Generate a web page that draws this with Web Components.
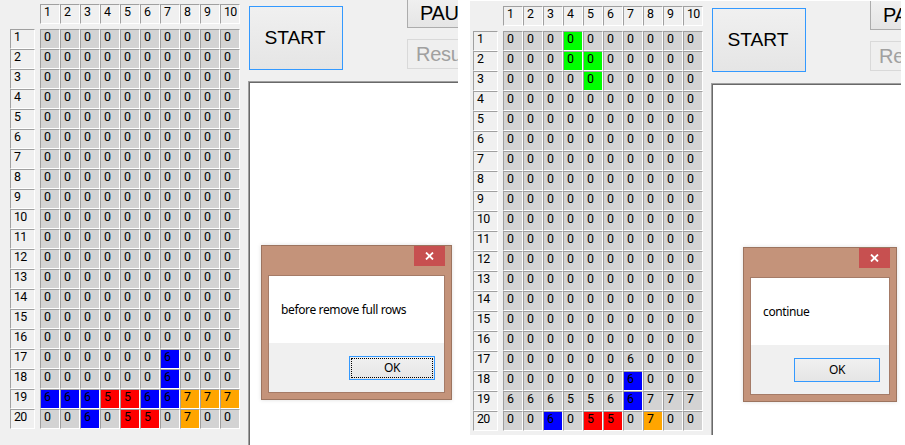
<!DOCTYPE html>
<html lang="en"><head><meta charset="utf-8"><title>Tetris board</title>
<style>
html,body{margin:0;width:905px;height:445px;overflow:hidden;background:#fff}
body{display:flex;align-items:flex-start;font-family:"Liberation Sans",Arial,sans-serif;color:#000}
game-window{--h:445px;--w:458px;--pl:10px;--pt:4px}
game-window.second{--h:434px;--w:431px;--pl:3px;--pt:5px;margin:1px 0 0 12px}
message-box{position:absolute;left:261px;top:245px;width:191px;height:155px}
message-box.second{left:743px;top:247px;width:154px}
</style></head><body>
<game-window pause="PAU" resume="Resu">
<number-grid slot="board" colored="17:7b 18:7b 19:1b 19:2b 19:3b 19:4r 19:5r 19:6b 19:7b 19:8o 19:9o 19:10o 20:3b 20:5r 20:6r 20:8o" numbers="17:7=6 18:7=6 19:1=6 19:2=6 19:3=6 19:4=5 19:5=5 19:6=6 19:7=6 19:8=7 19:9=7 19:10=7 20:3=6 20:5=5 20:6=5 20:8=7"></number-grid>
</game-window>
<game-window class="second" pause="PA" resume="Re">
<number-grid slot="board" colored="1:4g 2:4g 2:5g 3:5g 18:7b 19:7b 20:3b 20:5r 20:6r 20:8o" numbers="17:7=6 18:7=6 19:1=6 19:2=6 19:3=6 19:4=5 19:5=5 19:6=6 19:7=6 19:8=7 19:9=7 19:10=7 20:3=6 20:5=5 20:6=5 20:8=7"></number-grid>
</game-window>
<message-box focused>before remove full rows</message-box>
<message-box class="second">continue</message-box>
<script>
class NumberGrid extends HTMLElement{
 connectedCallback(){
  const root=this.attachShadow({mode:'open'});
  const colors={},nums={};
  this.getAttribute('colored').split(' ').forEach(s=>colors[s.slice(0,-1)]=s.slice(-1));
  this.getAttribute('numbers').split(' ').forEach(s=>{const [k,v]=s.split('=');nums[k]=v});
  let top='',side='',cells='';
  for(let c=1;c<=10;c++)top+=`<div class="cell head">${c}</div>`;
  for(let r=1;r<=20;r++){
   side+=`<div class="cell head row">${r}</div>`;
   for(let c=1;c<=10;c++){const k=r+':'+c;cells+=`<div class="cell ${colors[k]||''}">${nums[k]||0}</div>`}
  }
  root.innerHTML=`<style>
  :host{display:grid;grid-template-columns:25px 200px;grid-template-rows:20px 400px;gap:5px;font:12.4px/14px Roboto,sans-serif;letter-spacing:-.7px}
  .top,.cells{display:grid;grid-template-columns:repeat(10,20px);grid-auto-rows:20px}
  .top{grid-column:2}
  .side{display:grid;grid-auto-rows:20px}
  .cell{box-sizing:border-box;background:#d3d3d3;border:1px solid;border-color:#a0a0a0 #fff #fff #a0a0a0;padding:0 0 0 3px;white-space:nowrap}
  .head{background:#f0f0f0}
  .g{background:#0f0}.b{background:#00f}.r{background:#f00}.o{background:#ffa500}
  </style><div class="top">${top}</div><div class="side">${side}</div><div class="cells">${cells}</div>`;
 }
}
class PushButton extends HTMLElement{
 connectedCallback(){
  this.attachShadow({mode:'open'}).innerHTML=`<style>
  :host{display:flex;box-sizing:border-box;align-items:center;justify-content:center;border:1px solid #acacac;background:linear-gradient(#f0f0f0,#e5e5e5);white-space:nowrap;overflow:hidden}
  :host([default]){border-color:#3399ff}
  :host([disabled]){border-color:#d9d9d9;background:#efefef;color:#a0a0a0}
  </style><slot></slot>`;
 }
}
class GameWindow extends HTMLElement{
 connectedCallback(){
  this.attachShadow({mode:'open'}).innerHTML=`<style>
  :host{display:flex;box-sizing:border-box;width:var(--w);height:var(--h);padding-left:var(--pl);background:#f0f0f0;overflow:hidden;flex:none}
  .board{padding-top:var(--pt);width:230px;flex:none}
  .side{display:flex;flex-direction:column;flex:1;min-width:0;margin-left:8px;height:100%;overflow:hidden}
  .tools{display:flex;height:77px;margin-top:var(--pt);flex:none;gap:64px}
  .start{width:94px;height:64px;margin:2px 0 0 1px;font-size:19.2px;flex:none;padding-right:2px}
  .col{display:flex;flex-direction:column;gap:11px;width:110px;flex:none;margin-top:-6px}
  .col push-button{height:30px;flex:none;font-size:20px;letter-spacing:-.4px;justify-content:flex-start;padding-left:12px}
  .col push-button[disabled]{padding-left:8px;letter-spacing:-.3px}
  .text{box-sizing:border-box;flex:1;border:solid #a0a0a0;border-width:1px 0 0 1px;background:#fff}
  .text i{display:block;height:100%;box-sizing:border-box;border:solid #696969;border-width:1px 0 0 1px}
  </style><div class="board"><slot name="board"></slot></div><div class="side"><div class="tools"><push-button class="start" default>START</push-button><div class="col"><push-button>${this.getAttribute('pause')}</push-button><push-button disabled>${this.getAttribute('resume')}</push-button></div></div><div class="text"><i></i></div></div>`;
 }
}
class MessageBox extends HTMLElement{
 connectedCallback(){
  this.attachShadow({mode:'open'}).innerHTML=`<style>
  :host{display:flex;flex-direction:column;box-sizing:border-box;border:1px solid #9c745f;background:#c4937a;padding:0 6px 6px;box-shadow:0 0 4px #0002;font:12px/16px "Noto Sans","Open Sans",sans-serif;letter-spacing:-.37px}
  .bar{display:flex;justify-content:flex-end;height:29px;flex:none}
  .close{display:flex;align-items:center;justify-content:center;width:31px;height:20px;background:#c75050}
  .client{box-sizing:border-box;border:1px solid #a57b67;flex:1;display:flex;flex-direction:column;background:#f0f0f0}
  .msg{background:#fff;height:67px;box-sizing:border-box;padding:26px 0 0 12px;white-space:nowrap;flex:none}
  .foot{display:flex;justify-content:flex-end;padding:13px 9px 0 0}
  .foot push-button{width:86px;height:24px;position:relative}
  :host([focused]) .foot push-button::after{content:"";position:absolute;inset:1px;border:1px dotted #000}
  </style><div class="bar"><div class="close"><svg width="9" height="8" viewBox="0 0 9 8"><path d="M1 .5 8 7.5M8 .5 1 7.5" stroke="#fff" stroke-width="1.8"/></svg></div></div><div class="client"><div class="msg"><slot></slot></div><div class="foot"><push-button default>OK</push-button></div></div>`;
 }
}
customElements.define('push-button',PushButton);
customElements.define('number-grid',NumberGrid);
customElements.define('game-window',GameWindow);
customElements.define('message-box',MessageBox);
</script></body></html>
